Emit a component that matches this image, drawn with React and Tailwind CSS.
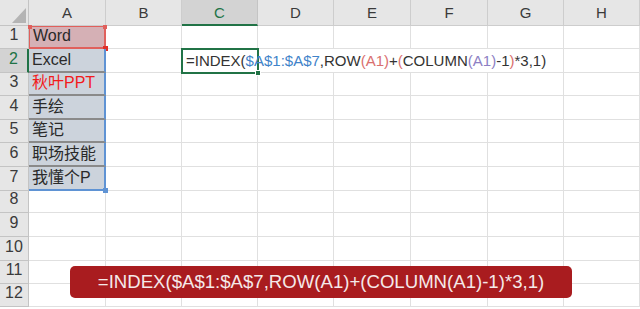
import React from "react";

const COLS = ["A", "B", "C", "D", "E", "F", "G", "H"];
const ROW_H = [23, 24, 23, 24, 23, 24, 24, 22, 24, 24, 23, 23];

const A_VALUES = [
  { t: "Word" },
  { t: "Excel" },
  { t: "秋叶PPT", red: true },
  { t: "手绘" },
  { t: "笔记" },
  { t: "职场技能" },
  { t: "我懂个P" },
];

const font = { fontFamily: '"Liberation Sans", "Noto Sans CJK SC", Arial, sans-serif' };

function Formula() {
  return (
    <span className="text-[#333]">
      =INDEX(
      <span className="text-[#3f83c9]">$A$1:$A$7</span>
      ,ROW<span className="text-[#d9706f]">(A1)</span>+<span className="text-[#d9706f]">(</span>COLUMN
      <span className="text-[#8d7fc4]">(A1)</span>-1<span className="text-[#d9706f]">)</span>*3,1)
    </span>
  );
}

function ColHeader({ c }) {
  if (c === "C") {
    return (
      <div className="flex items-center justify-center bg-[#d3d3d3] border-r border-[#c4c4c4] border-b-2 border-b-[#217346] text-[15px] text-[#217346] pt-[2px]">
        {c}
      </div>
    );
  }
  return (
    <div className="flex items-center justify-center bg-[#e6e6e6] border-r border-b border-[#cdcdcd] text-[15px] text-[#3a3a3a] pt-[2px]">
      {c}
    </div>
  );
}

function RowHeader({ r }) {
  const sel = r === 2;
  return (
    <div
      className={
        sel
          ? "flex items-end justify-center pb-[1px] bg-[#d3d3d3] border-r-2 border-r-[#217346] border-b border-[#c4c4c4] text-[16px] text-[#217346]"
          : "flex items-end justify-center pb-[1px] bg-[#e6e6e6] border-r border-b border-[#c4c4c4] text-[16px] text-[#3a3a3a]"
      }
    >
      {r}
    </div>
  );
}

// row-2 cells that the overflowing formula runs across lose their right gridline
const SPILL = ["D", "E", "F"];

function Cell({ c, r }) {
  if (c === "A" && r <= 7) {
    const v = A_VALUES[r - 1];
    const first = r === 1;
    const last = r === 7;
    return (
      <div
        className={
          "relative flex items-end pl-[3px] pb-[1px] text-[16px] leading-[20px] " +
          (first
            ? "bg-[#d5b0b5] border border-r-2 border-b-2 border-[#e0605c] "
            : "bg-[#ccd3dc] border-r-2 border-r-[#5f93d4] ") +
          (last
            ? "border-b-2 border-b-[#5f93d4] "
            : first
            ? ""
            : "border-b-2 border-b-[#8a8a8a] ") +
          (v.red ? "text-[#f21b1b]" : "text-[#2a2a2a]")
        }
      >
        {v.t}
        {first && (
          <>
            <span className="absolute -left-[2px] -top-[2px] w-[4px] h-[4px] bg-[#e0605c]" />
            <span className="absolute -right-[3px] -top-[2px] w-[4px] h-[4px] bg-[#e0605c]" />
            <span className="absolute -right-[4px] -bottom-[4px] w-[5px] h-[5px] bg-[#e0302a]" />
          </>
        )}
        {last && <span className="absolute -right-[4px] -bottom-[4px] w-[5px] h-[5px] bg-[#5f93d4]" />}
      </div>
    );
  }
  if (c === "C" && r === 2) {
    // active cell: the formula being typed spills over the cells on its right
    return (
      <div className="relative z-10 flex items-center pl-[3px] -mx-[1px] -my-[1px] border-2 border-[#217346] text-[15px] leading-[20px] whitespace-nowrap overflow-visible">
        <Formula />
        <span className="absolute -right-[4px] -bottom-[4px] w-[6px] h-[6px] bg-[#217346] border border-white" />
      </div>
    );
  }
  if (r === 2 && SPILL.includes(c)) {
    return <div className="border-b border-[#e0e0e0]" />;
  }
  return <div className="border-r border-b border-[#e0e0e0]" />;
}

export default function App() {
  return (
    <div className="relative w-[640px] h-[309px] bg-white overflow-hidden" style={font}>
      <div className="grid grid-cols-[29px_77px_76px_76px_76px_77px_77px_76px_76px] grid-rows-[26px_23px_24px_23px_24px_23px_24px_24px_22px_24px_24px_23px_23px]">
        <div className="relative bg-[#e6e6e6] border-r border-b border-[#c4c4c4]">
          <svg className="absolute left-[12px] top-[8px]" width="14" height="15" viewBox="0 0 14 15">
            <polygon points="14,0 14,15 0,15" fill="#b4b4b4" />
          </svg>
        </div>
        {COLS.map((c) => (
          <ColHeader key={c} c={c} />
        ))}
        {ROW_H.map((h, i) => {
          const r = i + 1;
          return (
            <React.Fragment key={r}>
              <RowHeader r={r} />
              {COLS.map((c) => (
                <Cell key={c} c={c} r={r} />
              ))}
            </React.Fragment>
          );
        })}
      </div>

      {/* caption banner laid over the sheet */}
      <div className="absolute left-[70px] top-[266px] w-[502px] h-[32px] rounded-[5px] bg-[#a91c1f] flex items-center justify-center">
        <span className="text-[18.6px] text-[#f5e9e9] whitespace-nowrap">
          =INDEX($A$1:$A$7,ROW(A1)+(COLUMN(A1)-1)*3,1)
        </span>
      </div>
    </div>
  );
}
